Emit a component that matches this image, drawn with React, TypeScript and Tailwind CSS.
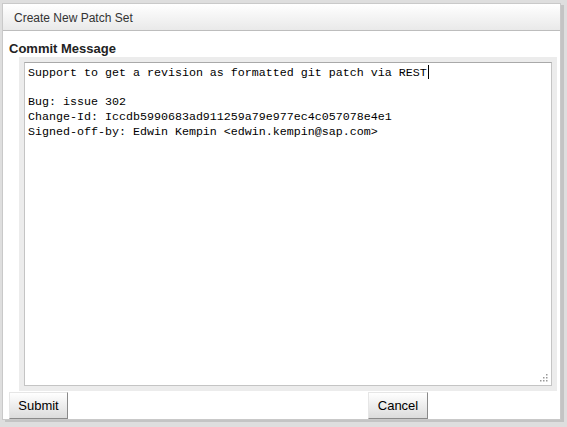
import React from "react";

function Btn({ children }: { children: React.ReactNode }) {
  return (
    <div className="flex h-[27px] items-center justify-center border border-t-[#e6e6e6] border-l-[#e6e6e6] border-r-[#8a8a8a] border-b-[#8a8a8a] bg-gradient-to-b from-[#ffffff] to-[#dcdcdc] px-[8px] text-[13px] text-black" style={{ fontFamily: "Arial, 'Liberation Sans', sans-serif" }}>
      {children}
    </div>
  );
}

export default function App() {
  const lines = [
    "Support to get a revision as formatted git patch via REST",
    "",
    "Bug: issue 302",
    "Change-Id: Iccdb5990683ad911259a79e977ec4c057078e4e1",
    "Signed-off-by: Edwin Kempin <edwin.kempin@sap.com>",
  ];
  return (
    <div className="h-[427px] w-[567px] overflow-hidden bg-[#dedede] pl-[2px] pt-[3px]" style={{ fontFamily: "Arial, 'Liberation Sans', sans-serif" }}>
      <div className="flex h-[417px] w-[559px] flex-col border border-[#c9c9c9] bg-white shadow-[3px_2px_0_#c4c4c4]">
        <div className="flex h-[27px] items-center border-b border-[#bdbdbd] bg-gradient-to-b from-[#ffffff] to-[#e9e9e9] pl-[11px] pt-[1px] text-[12px] text-[#333]">
          Create New Patch Set
        </div>
        <div className="pl-[6px] pt-[10px] text-[13px] font-bold leading-[15px] text-[#222]">Commit Message</div>
        <div className="ml-[16px] mt-[1px] h-[334px] w-[538px] bg-[#ececec] p-[5px]">
          <div className="relative h-full w-full border border-[#c4c4c4] border-t-[#a9a9a9] bg-white pl-[3px] pt-[2px]">
            <div className="text-[11.67px] leading-[15px] text-black" style={{ fontFamily: "'Courier New', 'Nimbus Mono PS', 'FreeMono', 'Liberation Mono', monospace" }}>
              {lines.map((l, i) => (
                <div key={i} className="h-[15px] whitespace-pre">
                  {l}
                  {i === 0 && <span className="ml-[1px] inline-block h-[14px] w-[1px] bg-black align-[-3px]" />}
                </div>
              ))}
            </div>
            <svg className="absolute bottom-[3px] right-[3px]" width="8" height="8" viewBox="0 0 8 8">
              <rect x="6" y="0" width="1.5" height="1.5" fill="#999" />
              <rect x="3" y="3" width="1.5" height="1.5" fill="#999" />
              <rect x="6" y="3" width="1.5" height="1.5" fill="#999" />
              <rect x="0" y="6" width="1.5" height="1.5" fill="#999" />
              <rect x="3" y="6" width="1.5" height="1.5" fill="#999" />
              <rect x="6" y="6" width="1.5" height="1.5" fill="#999" />
            </svg>
          </div>
        </div>
        <div className="flex pl-[6px] pt-[1px]">
          <div className="w-[59px]"><Btn>Submit</Btn></div>
          <div className="ml-[300px] w-[60px]"><Btn>Cancel</Btn></div>
        </div>
      </div>
    </div>
  );
}
